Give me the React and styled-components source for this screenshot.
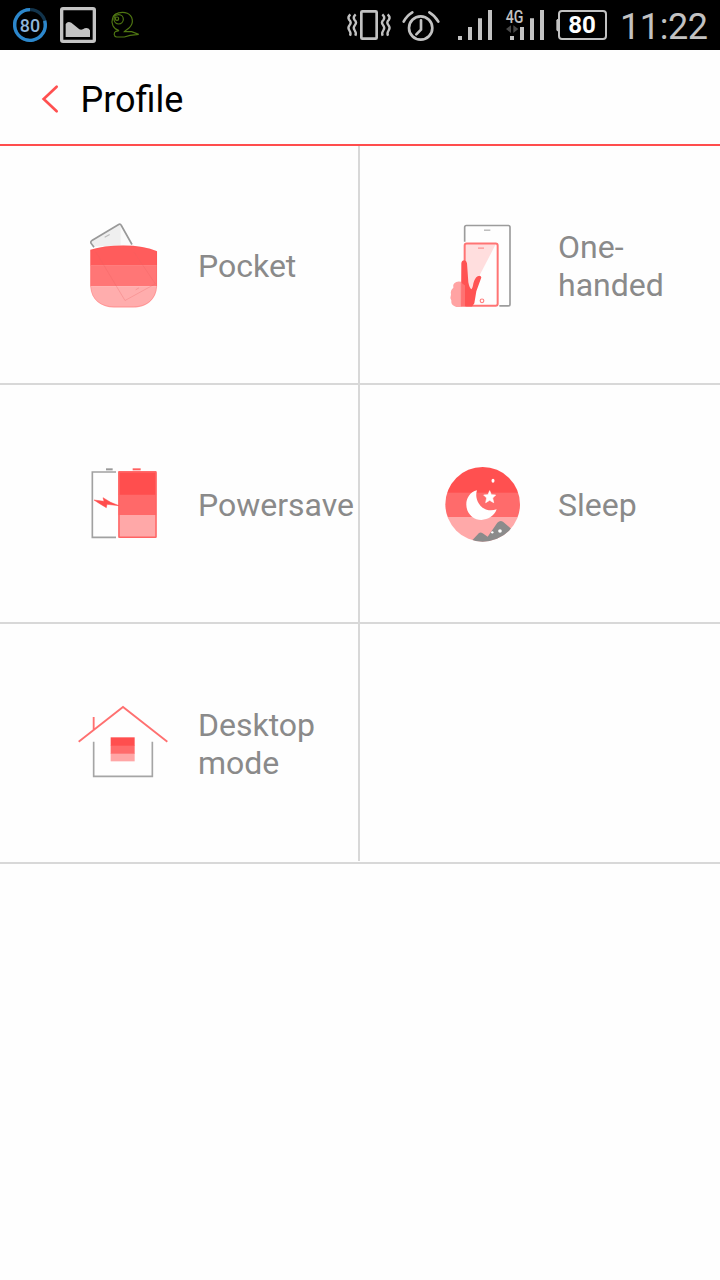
import React from 'react';
import styled, { createGlobalStyle } from 'styled-components';

const PocketIcon = () => (
  <Icon viewBox="0 1.5 330 330">
    <path d="M70 108L63 98Q61 93 67 89L146 42Q151 39 154 45L188 104Z" fill="#efefef" />
    <path d="M152 42L188 104H152Z" fill="#fafafa" />
    <path d="M72 110L63 98Q61 93 67 89L146 42Q151 39 154 45L186 102" fill="none" stroke="#999" strokeWidth="5" />
    <path d="M104 80L119 72" stroke="#bbb" strokeWidth="3.5" />
    <path d="M61 118Q100 105 160 105Q222 105 261 122V166H61Z" fill="#ff5c5c" />
    <path d="M61 165H261V228H61Z" fill="#ff7676" />
    <path d="M61 228H261C258 270 228 291 190 291H132C92 291 64 268 61 228Z" fill="#ffadad" />
    <path d="M62 228V120Q100 107 160 107Q222 107 260 123V228C257 268 228 289 190 289H132C94 289 64 268 62 228" fill="none" stroke="#ff5050" strokeWidth="3" opacity=".25" />
    <path d="M78 125L165 270L256 220L192 125" fill="none" stroke="#e86060" strokeWidth="3" opacity=".28" />
    <path d="M197 238L207 232" stroke="#e86060" strokeWidth="3" opacity=".3" />
  </Icon>
);

const OneHandedIcon = () => (
  <Icon viewBox="0 1.5 330 330">
    <path d="M104 94V50Q104 45 109 45H235Q240 45 240 50V281Q240 286 235 286H208" fill="none" stroke="#9c9c9c" strokeWidth="5" />
    <path d="M162 59H181" stroke="#aaa" strokeWidth="3.5" />
    <path d="M105 100H198L127 236L105 260Z" fill="#ffdede" />
    <rect x="104" y="99" width="99" height="187" rx="6" fill="none" stroke="#ff7474" strokeWidth="6" />
    <path d="M144 113H162" stroke="#ffa5a5" strokeWidth="5" />
    <path d="M94 214Q80 211 73 218Q67 223 70 232Q60 240 63 252Q59 262 64 270Q62 282 74 287Q80 291 94 289Z" fill="#ffa3a3" />
    <path d="M94 158Q95 149 103 149Q110 150 111 158L115 215Q118 231 124 236Q128 233 130 219Q134 202 143 197Q153 194 154 201L139 242L133 278L126 288H93Z" fill="#ff5353" />
    <path d="M92 215L105 225V288H92Z" fill="#ff8080" opacity=".7" />
    <circle cx="156" cy="271" r="5.5" fill="none" stroke="#ff8080" strokeWidth="3.5" />
  </Icon>
);

const PowersaveIcon = () => (
  <Icon viewBox="0 0 330 330">
    <path d="M138 66H67V262H138" fill="none" stroke="#a1a1a1" strokeWidth="5" />
    <path d="M108 58H128" stroke="#999" strokeWidth="6" />
    <path d="M188 58H212" stroke="#ff6060" strokeWidth="6" />
    <path d="M145 64H259V135H145Z" fill="#ff4e4e" />
    <path d="M145 134H259V196H145Z" fill="#ff6969" />
    <path d="M145 195H259V263H145Z" fill="#ffa8a8" />
    <rect x="147" y="66" width="111" height="196" rx="2" fill="none" stroke="#ff6464" strokeWidth="4.5" />
    <path d="M72 150L102 154L99 143L122 157L147 167L111 163L109 173L89 161Z" fill="#ff4d4d" stroke="#ff4d4d" strokeWidth="1.5" />
  </Icon>
);

const SleepIcon = () => (
  <Icon viewBox="0 0 330 330">
    <defs>
      <clipPath id="moonDisc">
        <circle cx="158" cy="163" r="112" />
      </clipPath>
    </defs>
    <g clipPath="url(#moonDisc)">
      <rect x="40" y="45" width="240" height="84" fill="#ff5050" />
      <rect x="40" y="128" width="240" height="74" fill="#ff6b6b" />
      <rect x="40" y="201" width="240" height="80" fill="#ffa9a9" />
      <path d="M120 278L147 249Q152 245 158 250L173 260L202 218Q210 210 219 215L250 242L225 280Z" fill="#8b8b8b" />
      <circle cx="210" cy="243" r="5.5" fill="#fff" />
      <circle cx="187" cy="247" r="3.5" fill="#fff" />
    </g>
    <path d="M141 121C104 130 99 179 126 200C150 219 189 209 200 178C180 185 157 180 146 160C138 146 137 133 141 121Z" fill="#fff" />
    <path d="M179 122L184 134L197 135L188 144L191 158L179 151L167 158L170 144L161 135L174 134Z" fill="#fff" stroke="#fff" strokeWidth="2" />
    <ellipse cx="189" cy="92" rx="4.5" ry="6" fill="#fff" />
  </Icon>
);

const DesktopIcon = () => (
  <Icon viewBox="0 -3 330 330">
    <path d="M71 155V259H247V155" fill="none" stroke="#a5a5a5" strokeWidth="5" />
    <path d="M26 155L159 51L292 155M71 81V119" fill="none" stroke="#ff7070" strokeWidth="5.5" />
    <rect x="122" y="142" width="72" height="26" fill="#ff4e4e" />
    <rect x="122" y="167" width="72" height="25" fill="#ff6b6b" />
    <rect x="122" y="191" width="72" height="23" fill="#ffa6a6" />
  </Icon>
);

const profiles = [
  { name: 'Pocket', icon: <PocketIcon /> },
  { name: 'One-handed', icon: <OneHandedIcon /> },
  { name: 'Powersave', icon: <PowersaveIcon /> },
  { name: 'Sleep', icon: <SleepIcon /> },
  { name: 'Desktop mode', icon: <DesktopIcon /> },
];

const StatusBar = () => (
  <Bar>
    <BarGroup>
      <StatusIcon width="36" viewBox="36 0 108 150">
        <circle cx="90" cy="75" r="46" fill="none" stroke="#12344c" strokeWidth="10" />
        <path d="M90 29A46 46 0 1 0 134 62" fill="none" stroke="#2c87cc" strokeWidth="10" />
        <text x="90" y="95" textAnchor="middle" textLength="61" lengthAdjust="spacingAndGlyphs" fontSize="55" fontWeight="500" fill="#8fb6dc">80</text>
      </StatusIcon>
      <StatusIcon width="36" viewBox="180 0 108 150">
        <rect x="185" y="26" width="98" height="98" rx="4" fill="#000" stroke="#c4c4c4" strokeWidth="10" />
        <path d="M197 111V72Q203 62 214 68L238 88Q246 91 254 85Q265 82 270 91V111Z" fill="#c4c4c4" />
      </StatusIcon>
      <StatusIcon width="32" viewBox="324 0 96 150">
        <g fill="none" stroke="#4f7612" strokeWidth="3.5">
          <path d="M338 54C343 39 366 33 382 40C399 48 402 69 389 82C383 88 376 91 373 95H395L416 103L390 106L373 111H350C341 110 340 98 348 94L357 92C340 87 332 70 338 54Z" />
          <circle cx="356" cy="58" r="14" />
          <circle cx="351" cy="56" r="5" />
          <path d="M339 50L350 40" />
        </g>
      </StatusIcon>
    </BarGroup>
    <BarGroup>
      <StatusIcon width="44" viewBox="18 0 132 150">
        <g fill="none" stroke="#c2c2c2">
          <rect x="64" y="34" width="46" height="82" rx="3" strokeWidth="8" />
          <path d="M31 43Q22 51 27 59Q36 67 29 75Q22 83 28 91Q34 99 30 107M47 43Q38 51 43 59Q52 67 45 75Q38 83 44 91Q50 99 46 107M127 43Q136 51 131 59Q122 67 129 75Q136 83 130 91Q124 99 128 107M143 43Q152 51 147 59Q138 67 145 75Q152 83 146 91Q140 99 144 107" strokeWidth="7" />
        </g>
      </StatusIcon>
      <StatusIcon width="38" viewBox="186 0 114 150">
        <g fill="none" stroke="#c2c2c2" strokeLinecap="round">
          <circle cx="242" cy="84" r="35" strokeWidth="8" />
          <path d="M243 61V89L229 103" strokeWidth="8" strokeLinejoin="round" />
          <path d="M191 65Q200 47 217 37M268 37Q285 47 295 65" strokeWidth="8" />
        </g>
      </StatusIcon>
      <StatusIcon width="41" viewBox="336 0 123 150">
        <path d="M354 108H366V120H354ZM384 81H396V120H384ZM414 55H426V120H414ZM444 30H456V120H444Z" fill="#c2c2c2" />
      </StatusIcon>
      <StatusIcon width="39" viewBox="495 0 117 150">
        <text x="497" y="69" textLength="53" lengthAdjust="spacingAndGlyphs" fontSize="53" fontWeight="500" fill="#c2c2c2">4G</text>
        <path d="M498 87L513 76V99ZM535 87L520 76V99Z" fill="#484848" />
        <path d="M510 108H522V120H510ZM540 81H552V120H540ZM570 55H582V120H570ZM600 30H612V120H600Z" fill="#c2c2c2" transform="translate(0 0)" />
      </StatusIcon>
      <StatusIcon width="52" viewBox="168 0 156 150">
        <path d="M178 57H172L169 61V90L172 94H178Z" fill="#c2c2c2" />
        <rect x="177" y="33" width="141" height="84" rx="9" fill="none" stroke="#c2c2c2" strokeWidth="6" />
        <text x="246" y="98" textAnchor="middle" textLength="83" lengthAdjust="spacingAndGlyphs" fontSize="70" fontWeight="700" fill="#fff">80</text>
      </StatusIcon>
      <Clock>11:22</Clock>
    </BarGroup>
  </Bar>
);

const App = () => {
  return (
    <Screen>
      <GlobalStyle />
      <StatusBar />
      <Header>
        <BackIcon viewBox="0 0 54 90">
          <path d="M47 8L8 45L47 82" fill="none" stroke="#ff5050" strokeWidth="8" strokeLinecap="round" />
        </BackIcon>
        <Title>Profile</Title>
      </Header>
      <Grid>
        {profiles.map((profile) => (
          <Cell key={profile.name}>
            {profile.icon}
            <Label>{profile.name}</Label>
          </Cell>
        ))}
        <Cell />
      </Grid>
    </Screen>
  );
};

export default App;

const GlobalStyle = createGlobalStyle`
*{
  box-sizing:border-box;
}

body{
  margin:0;
  background:#fefefe;
  font-family:Roboto, "Noto Sans", sans-serif;
}
`;

const Screen = styled.div`
width:720px;
height:1280px;
overflow:hidden;
background:#fefefe;
`;

const Bar = styled.div`
display:flex;
justify-content:space-between;
height:50px;
padding:0 11px 0 12px;
background:#000;
`;

const BarGroup = styled.div`
display:flex;
align-items:center;
gap:12px;
`;

const StatusIcon = styled.svg`
flex:none;
height:50px;
overflow:visible;
font-family:Roboto, sans-serif;
`;

const Clock = styled.span`
width:89px;
padding-top:3px;
font-size:36px;
line-height:50px;
letter-spacing:-0.4px;
white-space:nowrap;
color:#c2c2c2;
`;

const Header = styled.header`
display:flex;
align-items:center;
height:96px;
padding:6px 0 0 41px;
border-bottom:2px solid #ff4d4d;
`;

const BackIcon = styled.svg`
width:18px;
height:30px;
margin:-3px 21.5px 0 0;
`;

const Title = styled.h1`
margin:0;
font-size:36px;
font-weight:400;
line-height:42px;
color:#000;
`;

const Grid = styled.main`
display:grid;
grid-template-columns:360px 360px;
grid-template-rows:239px 239px 237px;
padding-bottom:1px;
border-bottom:2px solid #d8d8d8;
`;

const Cell = styled.div`
display:flex;
align-items:center;
padding:2px 0 0 70px;
border-bottom:2px solid #d8d8d8;

&:nth-child(odd){
  border-right:2px solid #d8d8d8;
}

&:nth-child(n+5){
  padding-top:3px;
  border-bottom:none;
}
`;

const Icon = styled.svg`
flex:none;
width:110px;
height:110px;
margin-right:18px;
`;

const Label = styled.span`
font-size:32px;
line-height:38px;
color:#8a8a8a;
`;
